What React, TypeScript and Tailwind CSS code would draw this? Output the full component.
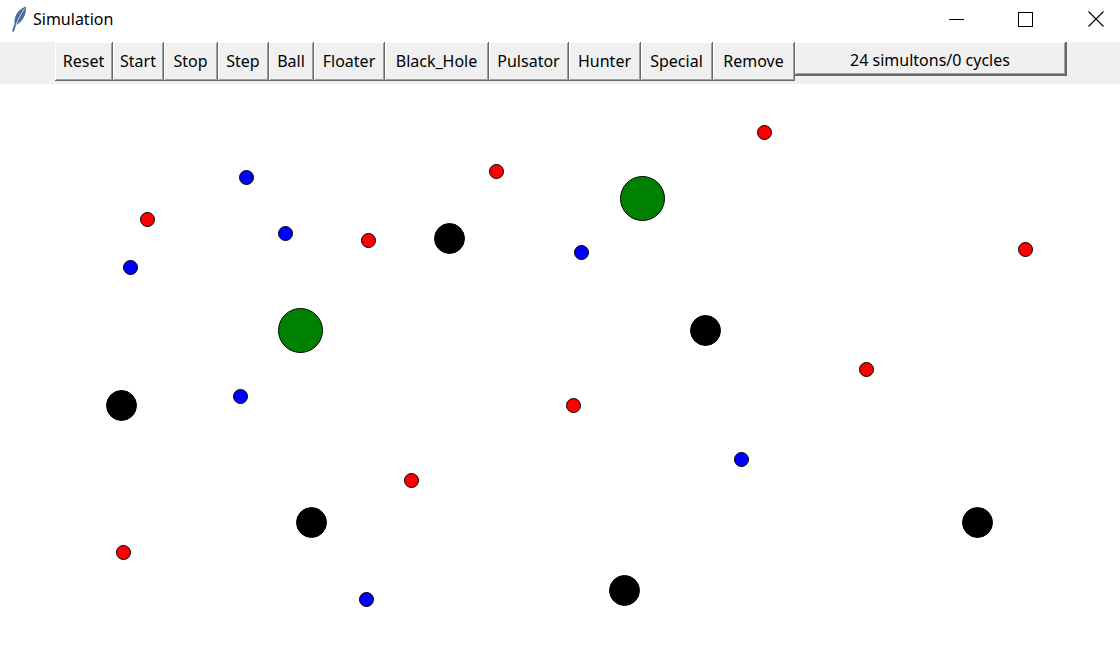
const buttons: { label: string; w: number }[] = [
  { label: "Reset", w: 58 },
  { label: "Start", w: 51 },
  { label: "Stop", w: 54 },
  { label: "Step", w: 51 },
  { label: "Ball", w: 45 },
  { label: "Floater", w: 71 },
  { label: "Black_Hole", w: 104 },
  { label: "Pulsator", w: 80 },
  { label: "Hunter", w: 72 },
  { label: "Special", w: 72 },
  { label: "Remove", w: 82 },
];

type Dot = [number, number];

const reds: Dot[] = [
  [764, 132], [496, 171], [147, 219], [368, 240], [1025, 249],
  [866, 369], [573, 405], [411, 480], [123, 552],
];
const blues: Dot[] = [
  [246, 177], [285, 233], [130, 267], [581, 252], [240, 396], [741, 459], [366, 599],
];
const blacks: Dot[] = [
  [449, 238], [705, 330], [121, 405], [311, 522], [624, 590], [977, 522],
];
const greens: Dot[] = [
  [642, 198], [300, 330],
];

function Feather() {
  return (
    <svg width="18" height="26" viewBox="0 0 18 26">
      <path d="M16 0.5 C8 3 4 10 4.5 17.5 L2 25.5 L4 25.5 L6 19 C12.5 16 16.5 9 16 0.5 Z" fill="#4a6b9c" />
      <path d="M14.5 2.5 C11 8 8 13 6 19" stroke="#c9d6ea" strokeWidth="1" fill="none" />
    </svg>
  );
}

function TitleBar() {
  return (
    <div className="h-[42px] bg-white flex items-center text-black">
      <div className="w-[33px] flex justify-center pl-1 -mt-1">
        <Feather />
      </div>
      <span className="text-[16px] leading-none -mt-1" style={{ fontFamily: '"Noto Sans", "Open Sans", sans-serif' }}>
        Simulation
      </span>
      <div className="ml-auto flex h-full -mt-1">
        <div className="w-[43px] flex items-center justify-center">
          <div className="w-[15px] h-px bg-black" />
        </div>
        <div className="w-[94px] flex items-center justify-center">
          <div className="w-[15px] h-[15px] border border-black" />
        </div>
        <div className="w-[48px] flex items-center justify-center">
          <svg width="16" height="16" viewBox="0 0 16 16">
            <path d="M0.5 0.5 L15.5 15.5 M15.5 0.5 L0.5 15.5" stroke="#000" strokeWidth="1.1" />
          </svg>
        </div>
      </div>
    </div>
  );
}

function ToolButton({ label, w }: { label: string; w: number }) {
  return (
    <div
      className="h-[39px] flex items-center justify-center bg-[#f0f0f0] border-r border-b border-[#696969] shadow-[inset_1px_1px_0_#ffffff,inset_-1px_-1px_0_#a0a0a0] text-[16px] text-black"
      style={{ width: w }}
    >
      {label}
    </div>
  );
}

export default function App() {
  return (
    <div
      className="w-[1120px] h-[672px] bg-white overflow-hidden flex flex-col"
      style={{ fontFamily: '"Noto Sans", "Open Sans", sans-serif' }}
    >
      <TitleBar />
      <div className="h-[42px] bg-[#f0f0f0] flex items-start pl-[55px]">
        {buttons.map((b) => (
          <ToolButton key={b.label} label={b.label} w={b.w} />
        ))}
        <div className="w-[272px] h-[34px] flex items-center justify-center pt-[4px] bg-[#f0f0f0] border-r-2 border-b-2 border-[#696969] shadow-[inset_1px_1px_0_#ffffff,inset_-1px_-1px_0_#a0a0a0] text-[16px] leading-none text-black">
          24 simultons/0 cycles
        </div>
      </div>
      <div className="flex-1 bg-white">
        <svg width="1120" height="588" viewBox="-0.5 83.5 1120 588">
          {greens.map(([x, y], i) => (
            <circle key={"g" + i} cx={x} cy={y} r={22} fill="#008000" stroke="#000" strokeWidth="1" />
          ))}
          {blacks.map(([x, y], i) => (
            <circle key={"k" + i} cx={x} cy={y} r={15} fill="#000" stroke="#000" strokeWidth="1" />
          ))}
          {reds.map(([x, y], i) => (
            <circle key={"r" + i} cx={x} cy={y} r={7} fill="#ff0000" stroke="#000" strokeWidth="1" />
          ))}
          {blues.map(([x, y], i) => (
            <circle key={"b" + i} cx={x} cy={y} r={7} fill="#0000ff" stroke="#000" strokeWidth="1" />
          ))}
        </svg>
      </div>
    </div>
  );
}
